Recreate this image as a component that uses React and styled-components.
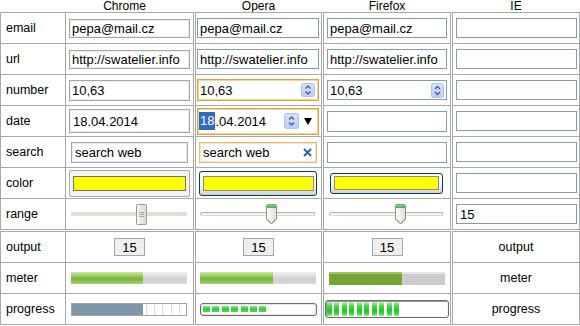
import React from "react";
import styled, { createGlobalStyle, css } from "styled-components";

const GlobalStyle = createGlobalStyle`
  html, body {
    margin: 0;
    padding: 0;
    background: #fff;
  }
  body {
    font-family: "Liberation Sans", Arial, sans-serif;
    color: #000;
  }
`;

const Page = styled.div`
  display: flex;
  gap: 1px;
  width: 580px;
  height: 326px;
  overflow: hidden;
`;

const Panel = styled.div`
  display: flex;
  flex-direction: column;
  flex: none;
`;

const HeadRow = styled.div`
  display: grid;
  grid-template-columns: ${(p) => p.$cols};
  column-gap: 1px;
  padding: 0 1px;
  height: 12px;
`;

const Head = styled.div`
  font-size: 12px;
  line-height: 12px;
  text-align: center;
  white-space: nowrap;
  padding-right: ${(p) => p.$shift || 0}px;
`;

const Block = styled.div`
  display: grid;
  grid-template-columns: ${(p) => p.$cols};
  grid-auto-rows: 30px;
  gap: 1px;
  padding: 1px;
  margin-top: ${(p) => p.$mt || 0}px;
  background: #a8a8a8;
`;

const Cell = styled.div`
  display: flex;
  align-items: center;
  justify-content: ${(p) => (p.$center ? "center" : "flex-start")};
  min-width: 0;
  background: #fff;
`;

const Label = styled(Cell)`
  padding-left: ${(p) => (p.$center ? 0 : 5)}px;
  font-size: 12.5px;
`;

const fieldSkins = {
  chrome: css`
    border: 1px solid #a6a6a6;
    box-shadow: inset 0 0 0 1px #ececec;
  `,
  xp: css`
    border: 1px solid #7f9db9;
  `,
  focus: css`
    border: 1px solid #d9a441;
    box-shadow: inset 0 0 0 1px #f4d48e;
  `,
  soft: css`
    border: 1px solid #e2b878;
    box-shadow: inset 0 0 0 1px #f8e6c6;
  `,
};

const Field = styled.div`
  box-sizing: border-box;
  flex: none;
  display: flex;
  align-items: center;
  width: ${(p) => p.$w}px;
  height: ${(p) => p.$h || 20}px;
  margin-left: ${(p) => p.$ml || 0}px;
  padding: 0 ${(p) => p.$pr ?? 2}px 0 ${(p) => p.$pl ?? 2}px;
  background: #fff;
  font-size: 13px;
  white-space: nowrap;
  overflow: hidden;
  ${(p) => fieldSkins[p.$skin || "xp"]}
`;

const Grow = styled.span`
  flex: 1;
`;

const Sel = styled.span`
  background: #316ac5;
  color: #fff;
  line-height: 18px;
  padding: 0 1px;
`;

const Icon = styled.svg`
  flex: none;
  display: block;
  margin-left: ${(p) => p.$ml || 0}px;
`;

const Spin = ({ w = 14, h = 14, ml }) => (
  <Icon $ml={ml} width={w} height={h} viewBox={`0 0 ${w} ${h}`}>
    <defs>
      <linearGradient id="spinbg" x1="0" y1="0" x2="0" y2="1">
        <stop offset="0" stopColor="#d6e1fd" />
        <stop offset="1" stopColor="#b9ccf9" />
      </linearGradient>
    </defs>
    <rect x=".5" y=".5" width={w - 1} height={h - 1} rx="2" fill="url(#spinbg)" stroke="#b0c1ea" />
    <path d={`M${w / 2 - 2.5} ${h / 2 - 1.5}l2.5 -2.5l2.5 2.5`} fill="none" stroke="#4d6185" strokeWidth="1.4" />
    <path d={`M${w / 2 - 2.5} ${h / 2 + 1.5}l2.5 2.5l2.5 -2.5`} fill="none" stroke="#4d6185" strokeWidth="1.4" />
  </Icon>
);

const Tri = ({ ml }) => (
  <Icon $ml={ml} width="8" height="7" viewBox="0 0 8 7">
    <path d="M0 0h8L4 7z" fill="#000" />
  </Icon>
);

const Cross = () => (
  <Icon width="9" height="9" viewBox="0 0 9 9">
    <path d="M1 1l7 7M8 1L1 8" stroke="#3a5fa6" strokeWidth="2" />
  </Icon>
);

const ChromeThumb = () => (
  <Icon width="11" height="21" viewBox="0 0 11 21">
    <defs>
      <linearGradient id="cthumb" x1="0" y1="0" x2="1" y2="0">
        <stop offset="0" stopColor="#f7f6f3" />
        <stop offset="1" stopColor="#dcd9d1" />
      </linearGradient>
    </defs>
    <rect x=".5" y=".5" width="10" height="20" rx="1" fill="url(#cthumb)" stroke="#9a9a9a" />
    <path d="M3 8.5h5M3 10.5h5M3 12.5h5" stroke="#a5a5a5" />
  </Icon>
);

const XpThumb = () => (
  <Icon width="11" height="21" viewBox="0 0 11 21">
    <defs>
      <linearGradient id="xthumb" x1="0" y1="0" x2="1" y2="0">
        <stop offset="0" stopColor="#fdfdfb" />
        <stop offset="1" stopColor="#dfded7" />
      </linearGradient>
    </defs>
    <path d="M1.5 .5h8a1 1 0 0 1 1 1V15l-5 5-5-5V1.5a1 1 0 0 1 1-1z" fill="url(#xthumb)" stroke="#8f8f8f" />
    <path d="M1 1h9v1.2H1z" fill="#7fd97f" />
    <path d="M1 2.2h9v1.6H1z" fill="#2fae2f" />
    <path d="M1.2 15.2l4.3 4.3 4.3-4.3" fill="none" stroke="#3fbe3f" />
  </Icon>
);

const Track = styled.div`
  box-sizing: border-box;
  flex: none;
  display: flex;
  align-items: center;
  width: ${(p) => p.$w}px;
  height: 4px;
  margin-left: ${(p) => p.$ml}px;
  ${(p) =>
    p.$xp
      ? css`
          border: 1px solid #b3b1aa;
          border-bottom-color: #dcdad3;
          border-radius: 2px;
          background: #f2f1ec;
        `
      : css`
          background: #e2ded6;
        `}
  & > svg {
    margin-left: ${(p) => p.$at}px;
  }
`;

const ColorBox = styled.div`
  box-sizing: border-box;
  flex: none;
  display: flex;
  align-items: center;
  justify-content: center;
  width: ${(p) => p.$w}px;
  height: ${(p) => p.$h}px;
  margin-left: ${(p) => p.$ml}px;
  ${(p) =>
    p.$skin === "chrome"
      ? css`
          border: 1px solid #a9a9a9;
          border-radius: 2px;
          background: #f3f3f3;
        `
      : css`
          border: 1px solid #003c74;
          border-radius: 3px;
          background: linear-gradient(#ffffff, #f5f5f1 55%, #e4e1d8 85%, #d3cec1);
        `}
`;

const Swatch = styled.div`
  box-sizing: border-box;
  width: ${(p) => p.$w}px;
  height: ${(p) => p.$h}px;
  background: #ffff00;
  border: 1px solid ${(p) => (p.$dark ? "#6f6f6f" : "#8a8a8a")};
`;

const Output = styled.div`
  box-sizing: border-box;
  display: flex;
  align-items: center;
  justify-content: center;
  width: 31px;
  height: 18px;
  border: 1px solid #a6a6a6;
  background: #efefef;
  font-size: 13px;
`;

const Meter = styled.div`
  flex: none;
  display: flex;
  width: ${(p) => p.$w}px;
  height: ${(p) => p.$h}px;
  margin-left: ${(p) => p.$ml}px;
  background: ${(p) =>
    p.$ff
      ? "linear-gradient(#e4e4e4 0 2px, #cbcbcb 2px)"
      : "linear-gradient(#f0f0f0, #dedede 35%, #cfcfcf 60%, #dadada)"};
`;

const MeterFill = styled.div`
  width: ${(p) => p.$pct}%;
  background: ${(p) =>
    p.$ff
      ? "linear-gradient(#9fc766 0 2px, #78a632 2px, #76a330)"
      : "linear-gradient(#c7e8a0, #a4d46e 25%, #7cb43e 55%, #8cc253 80%, #a9d47c)"};
`;

const progressSkins = {
  chrome: css`
    border: 1px solid #a5a5a5;
    background: repeating-linear-gradient(to right, #fff 0 7.3px, #dedede 7.3px 8.3px);
  `,
  opera: css`
    border: 1px solid #6b6b6b;
    border-radius: 3px;
    box-shadow: inset 0 0 0 1px #e4e4e4;
    padding: 0 2px;
    background: #fff;
  `,
  firefox: css`
    border: 1px solid #6d6d6d;
    border-radius: 3px;
    box-shadow: inset 1px 1px 0 #9a9a9a, inset -1px -1px 0 #f4f4f4;
    padding: 0 1px;
    background: #fff;
  `,
};

const Progress = styled.div`
  box-sizing: border-box;
  flex: none;
  display: flex;
  align-items: center;
  width: ${(p) => p.$w}px;
  height: ${(p) => p.$h}px;
  margin-left: ${(p) => p.$ml}px;
  ${(p) => progressSkins[p.$skin]}
`;

const fillSkins = {
  chrome: css`
    align-self: stretch;
    background: #7d97a9;
  `,
  opera: css`
    height: 6px;
    background: repeating-linear-gradient(to right, transparent 0 7px, #fff 7px 9.4px),
      linear-gradient(#8be88b, #30cc30 50%, #52d652);
  `,
  firefox: css`
    height: 14px;
    background: repeating-linear-gradient(to right, transparent 0 5px, #fff 5px 7.5px),
      linear-gradient(#b4f2b4, #41d841 30%, #1fc91f 60%, #45d645 85%, #9ce99c);
  `,
};

const ProgressFill = styled.div`
  width: ${(p) => p.$fw}px;
  ${(p) => fillSkins[p.$skin]}
`;

const P1 = "64px 127px";

export default function App() {
  return (
    <>
      <GlobalStyle />
      <Page>
        <Panel>
          <HeadRow $cols={P1}>
            <Head />
            <Head $shift={10}>Chrome</Head>
          </HeadRow>
          <Block $cols={P1}>
            <Label>email</Label>
            <Cell>
              <Field $skin="chrome" $ml={3} $w={121} $h={19}>pepa@mail.cz</Field>
            </Cell>
            <Label>url</Label>
            <Cell>
              <Field $skin="chrome" $ml={3} $w={121} $h={19}>http://swatelier.info</Field>
            </Cell>
            <Label>number</Label>
            <Cell>
              <Field $skin="chrome" $ml={3} $w={121} $h={21}>10,63</Field>
            </Cell>
            <Label>date</Label>
            <Cell>
              <Field $skin="chrome" $ml={3} $w={121} $h={24} $pl={3}>18.04.2014</Field>
            </Cell>
            <Label>search</Label>
            <Cell>
              <Field $skin="chrome" $ml={5} $w={117} $h={21} $pl={3}>search web</Field>
            </Cell>
            <Label>color</Label>
            <Cell>
              <ColorBox $skin="chrome" $ml={3} $w={121} $h={27}>
                <Swatch $dark $w={113} $h={15} />
              </ColorBox>
            </Cell>
            <Label>range</Label>
            <Cell>
              <Track $ml={5} $w={116} $at={65}>
                <ChromeThumb />
              </Track>
            </Cell>
          </Block>
          <Block $cols={P1} $mt={1}>
            <Label>output</Label>
            <Cell $center>
              <Output>15</Output>
            </Cell>
            <Label>meter</Label>
            <Cell>
              <Meter $ml={5} $w={116} $h={12}>
                <MeterFill $pct={62} />
              </Meter>
            </Cell>
            <Label>progress</Label>
            <Cell>
              <Progress $skin="chrome" $ml={5} $w={116} $h={13}>
                <ProgressFill $skin="chrome" $fw={71} />
              </Progress>
            </Cell>
          </Block>
        </Panel>

        <Panel>
          <HeadRow $cols="125px">
            <Head>Opera</Head>
          </HeadRow>
          <Block $cols="125px">
            <Cell>
              <Field $ml={1} $w={122}>pepa@mail.cz</Field>
            </Cell>
            <Cell>
              <Field $ml={1} $w={122}>http://swatelier.info</Field>
            </Cell>
            <Cell>
              <Field $skin="focus" $ml={1} $w={122} $h={22} $pr={3}>
                10,63
                <Grow />
                <Spin />
              </Field>
            </Cell>
            <Cell>
              <Field $skin="focus" $ml={1} $w={122} $h={27} $pl={1} $pr={6}>
                <Sel>18</Sel>.04.2014
                <Grow />
                <Spin w={15} h={16} />
                <Tri ml={5} />
              </Field>
            </Cell>
            <Cell>
              <Field $skin="soft" $ml={3} $w={118} $h={21} $pl={3} $pr={4}>
                search web
                <Grow />
                <Cross />
              </Field>
            </Cell>
            <Cell>
              <ColorBox $ml={3} $w={118} $h={25}>
                <Swatch $w={111} $h={15} />
              </ColorBox>
            </Cell>
            <Cell>
              <Track $xp $ml={4} $w={115} $at={65}>
                <XpThumb />
              </Track>
            </Cell>
          </Block>
          <Block $cols="125px" $mt={1}>
            <Cell $center>
              <Output>15</Output>
            </Cell>
            <Cell>
              <Meter $ml={4} $w={116} $h={12}>
                <MeterFill $pct={63} />
              </Meter>
            </Cell>
            <Cell>
              <Progress $skin="opera" $ml={4} $w={117} $h={13}>
                <ProgressFill $skin="opera" $fw={66} />
              </Progress>
            </Cell>
          </Block>
        </Panel>

        <Panel>
          <HeadRow $cols="126px">
            <Head>Firefox</Head>
          </HeadRow>
          <Block $cols="126px">
            <Cell>
              <Field $ml={3} $w={120}>pepa@mail.cz</Field>
            </Cell>
            <Cell>
              <Field $ml={3} $w={120}>http://swatelier.info</Field>
            </Cell>
            <Cell>
              <Field $ml={3} $w={120} $pr={2}>
                10,63
                <Grow />
                <Spin w={13} h={15} />
              </Field>
            </Cell>
            <Cell>
              <Field $ml={3} $w={120} $h={21} />
            </Cell>
            <Cell>
              <Field $ml={3} $w={120} $h={21} />
            </Cell>
            <Cell>
              <ColorBox $ml={6} $w={113} $h={21}>
                <Swatch $w={105} $h={14} />
              </ColorBox>
            </Cell>
            <Cell>
              <Track $xp $ml={5} $w={114} $at={65}>
                <XpThumb />
              </Track>
            </Cell>
          </Block>
          <Block $cols="126px" $mt={1}>
            <Cell $center>
              <Output>15</Output>
            </Cell>
            <Cell>
              <Meter $ff $ml={5} $w={116} $h={13}>
                <MeterFill $ff $pct={63} />
              </Meter>
            </Cell>
            <Cell>
              <Progress $skin="firefox" $ml={1} $w={124} $h={18}>
                <ProgressFill $skin="firefox" $fw={72} />
              </Progress>
            </Cell>
          </Block>
        </Panel>

        <Panel>
          <HeadRow $cols="126px">
            <Head>IE</Head>
          </HeadRow>
          <Block $cols="126px">
            {[0, 1, 2, 3, 4, 5].map((i) => (
              <Cell key={i}>
                <Field $ml={3} $w={121} />
              </Cell>
            ))}
            <Cell>
              <Field $ml={3} $w={121} $pl={3}>15</Field>
            </Cell>
          </Block>
          <Block $cols="126px" $mt={1}>
            <Label $center>output</Label>
            <Label $center>meter</Label>
            <Label $center>progress</Label>
          </Block>
        </Panel>
      </Page>
    </>
  );
}
